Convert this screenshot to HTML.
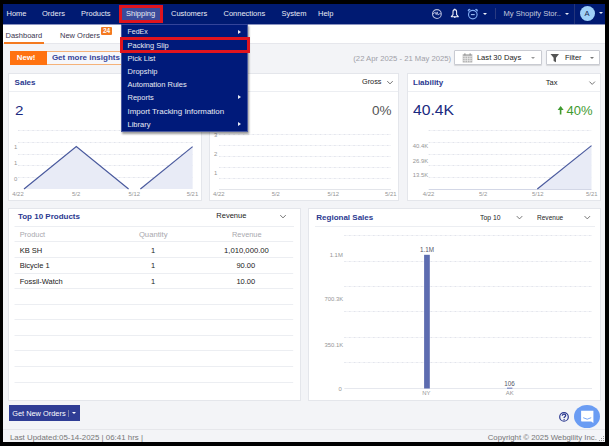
<!DOCTYPE html>
<html><head><meta charset="utf-8">
<style>
*{margin:0;padding:0;box-sizing:border-box}
html,body{width:609px;height:446px;overflow:hidden;background:#000}
body{position:relative;font-family:"Liberation Sans",sans-serif;font-size:7.5px;color:#333}
.a{position:absolute;white-space:nowrap;line-height:1}
#frame{position:absolute;left:3px;top:4px;width:602px;height:438px;background:#f3f4f7;overflow:hidden}
#nav{position:absolute;left:3px;top:4px;width:602px;height:20px;background:#001a72}
.nv{color:#e8ebf5;font-size:7.5px}
#tabs{position:absolute;left:3px;top:24px;width:602px;height:20px;background:#fff;border-bottom:1px solid #e6e7ec}
.card{position:absolute;background:#fff;border:1px solid #e4e6eb}
.ttl{color:#2b3990;font-weight:bold;font-size:8px}
.hl{position:absolute;height:1px;background:#eceef2}
.grid{position:absolute;height:0;border-top:1px dashed #e6e7eb}
.lbl{color:#8a8a8a;font-size:5px}
.menu{position:absolute;left:121px;top:24px;width:127px;height:107.5px;background:#001a7a;box-shadow:1px 1.5px 2px rgba(0,0,0,.4);border:1px solid #4a5aa0;border-top:1px solid #34449a}
.mi{color:#e8ebf5;font-size:7.5px}
.arr{position:absolute;width:0;height:0;border-top:2.5px solid transparent;border-bottom:2.5px solid transparent;border-left:3px solid #e8ebf5}
.row{position:absolute;height:1px;background:#eceef2}
.td{color:#222;font-size:7.5px}
</style></head><body>
<div id="frame"></div>
<!-- NAVBAR -->
<div id="nav"></div>
<div class="a nv" style="left:6.5px;top:10px">Home</div>
<div class="a nv" style="left:42px;top:10px">Orders</div>
<div class="a nv" style="left:81px;top:10px">Products</div>
<div class="a" style="left:119px;top:4.5px;width:44px;height:18.5px;background:#3b4b9a;border:3px solid #e0141e"></div>
<div class="a nv" style="left:126px;top:10px">Shipping</div>
<div class="a nv" style="left:171px;top:10px">Customers</div>
<div class="a nv" style="left:223.5px;top:10px">Connections</div>
<div class="a nv" style="left:281.5px;top:10px">System</div>
<div class="a nv" style="left:318px;top:10px">Help</div>

<!-- right nav icons -->
<svg class="a" style="left:430px;top:7px" width="14" height="14" viewBox="0 0 14 14">
<circle cx="6.9" cy="7" r="4.4" fill="none" stroke="#b4bbdc" stroke-width="1.05"/>
<path d="M2.8 7.2L5.2 5.2 6.2 7.6 7.2 4.9 8.1 8.1 9.3 6.8H11" fill="none" stroke="#b4bbdc" stroke-width="0.95" stroke-linejoin="round"/>
</svg>
<svg class="a" style="left:449px;top:7px" width="12" height="13" viewBox="0 0 12 13">
<path d="M5.8 2.6C4.5 2.6 4 3.6 4 4.8V7.7L2.3 9.7H9.3L7.6 7.7V4.8C7.6 3.6 7.1 2.6 5.8 2.6z" fill="none" stroke="#f0f2fa" stroke-width="1.05" stroke-linejoin="round"/>
<circle cx="5.8" cy="2.1" r=".6" fill="#f0f2fa"/><circle cx="5.8" cy="10.3" r=".8" fill="#f0f2fa"/>
</svg>
<svg class="a" style="left:466px;top:7px" width="14" height="14" viewBox="0 0 14 14">
<circle cx="6.8" cy="7.6" r="4.3" fill="none" stroke="#7fabf3" stroke-width="1.15"/>
<path d="M4.9 7.6h3.8" stroke="#9fc0f6" stroke-width="1.1"/>
<path d="M2.2 4.7L4.7 2.2A1.77 1.77 0 0 0 2.2 4.7z" fill="#7fabf3"/>
<path d="M11.4 4.7L8.9 2.2A1.77 1.77 0 0 1 11.4 4.7z" fill="#7fabf3"/>
</svg>
<div class="arr" style="left:483.2px;top:12.6px;border:none;border-left:2.1px solid transparent;border-right:2.1px solid transparent;border-top:2.6px solid #f0f2fa"></div>
<div class="a" style="left:495px;top:8px;width:1px;height:11px;background:#2a3a80"></div>
<div class="a" style="left:503.5px;top:10px;color:#c4c9de;font-size:7.6px">My Shopify Stor..</div>
<div class="arr" style="left:564.5px;top:12.5px;border:none;border-left:2px solid transparent;border-right:2px solid transparent;border-top:2.5px solid #e8ebf5"></div>
<div class="a" style="left:574px;top:4px;width:1px;height:20px;background:#23347a"></div>
<div class="a" style="left:579.5px;top:5.5px;width:15px;height:15px;border-radius:50%;background:#9fd0f8;color:#1a2850;font-size:7.6px;text-align:center;line-height:15px;transform:none">A</div>
<div class="arr" style="left:598.7px;top:12px;border:none;border-left:2px solid transparent;border-right:2px solid transparent;border-top:2.5px solid #e8ebf5"></div>

<!-- TABS -->
<div id="tabs"></div>
<div class="a" style="left:3px;top:24px;width:602px;height:1px;background:#8a93c0"></div>
<div class="a" style="left:5.5px;top:31.5px;color:#3a3550;font-size:7.5px">Dashboard</div>
<div class="a" style="left:4px;top:42px;width:40px;height:2px;background:#f47a20"></div>
<div class="a" style="left:60px;top:31.5px;color:#3a3550;font-size:7.5px">New Orders</div>
<div class="a" style="left:101px;top:27.3px;width:11px;height:7.3px;background:#f47a20;color:#fff;font-size:6.5px;font-weight:bold;text-align:center;line-height:7.5px;border-radius:1px">24</div>

<!-- insights row -->
<div class="a" style="left:10px;top:50.5px;width:37px;height:14.5px;background:#ff7210"></div>
<div class="a" style="left:16.8px;top:54.2px;color:#fff;font-weight:bold;font-size:7.8px">New!</div>
<div class="a" style="left:47px;top:50.5px;width:200px;height:14.5px;background:#f6f7fb;border:1px solid #f5b27a;border-left:none"></div>
<div class="a" style="left:51.9px;top:54.2px;color:#34449a;font-weight:bold;font-size:8px">Get more insights on your business</div>

<div class="a" style="left:353.3px;top:55px;color:#a0a0a8;font-size:7.7px">(22 Apr 2025 - 21 May 2025)</div>
<div class="a" style="left:454.4px;top:50px;width:87.7px;height:15px;background:#fff;border:1px solid #c9cbd2;border-radius:1px;box-shadow:0 1px 1px rgba(0,0,0,.12)"></div>
<svg class="a" style="left:462px;top:53px" width="11" height="10" viewBox="0 0 11 10">
<rect x="0.7" y="1.2" width="9.6" height="8.3" fill="#b4b4b4"/>
<g stroke="#f4f4f4" stroke-width="0.6"><path d="M0.7 3.4h9.6M0.7 5.4h9.6M0.7 7.4h9.6M3.1 3.4v6.1M5.5 3.4v6.1M7.9 3.4v6.1"/></g>
<g fill="#8a8a8a"><rect x="2.4" y="0.3" width="1" height="2"/><rect x="7.6" y="0.3" width="1" height="2"/></g>
</svg>
<div class="a" style="left:476.9px;top:53.7px;color:#222;font-size:7.6px">Last 30 Days</div>
<div class="arr" style="left:530.5px;top:56.5px;border:none;border-left:2.5px solid transparent;border-right:2.5px solid transparent;border-top:2.5px solid #999"></div>
<div class="a" style="left:546px;top:50px;width:53.5px;height:15px;background:#fff;border:1px solid #c9cbd2;border-radius:1px;box-shadow:0 1px 1px rgba(0,0,0,.12)"></div>
<svg class="a" style="left:550px;top:53px" width="10" height="10" viewBox="0 0 10 10"><path d="M0.5 1h8.5L6 4.8v4.4L3.6 8V4.8z" fill="#555"/></svg>
<div class="a" style="left:564.9px;top:53.7px;color:#222;font-size:7.5px">Filter</div>
<div class="arr" style="left:589.8px;top:56.5px;border:none;border-left:2px solid transparent;border-right:2px solid transparent;border-top:2.5px solid #777"></div>

<!-- TOP CARDS -->
<div class="card" style="left:7.5px;top:73px;width:194px;height:128px"></div>
<div class="hl" style="left:8.5px;top:91px;width:192px"></div>
<div class="a ttl" style="left:14.6px;top:78.7px">Sales</div>
<div class="a" style="left:15px;top:103.6px;color:#1a2a80;font-size:13.6px;transform:scaleX(1.12);transform-origin:0 0">2</div>

<div class="card" style="left:208.5px;top:73px;width:190px;height:128px"></div>
<div class="hl" style="left:209.5px;top:91px;width:188px"></div>
<div class="a" style="left:362px;top:78px;color:#222;font-size:7.3px">Gross</div>
<div class="a" style="left:372px;top:104px;color:#555;font-size:13.5px">0%</div>

<div class="card" style="left:406.5px;top:73px;width:194px;height:128px"></div>
<div class="hl" style="left:407.5px;top:91px;width:192px"></div>
<div class="a ttl" style="left:413px;top:79px">Liability</div>
<div class="a" style="left:545.8px;top:79px;color:#222;font-size:7.5px">Tax</div>
<div class="a" style="left:413px;top:104px;color:#1a2a80;font-size:13.8px;transform:scaleX(1.14);transform-origin:0 0">40.4K</div>
<svg class="a" style="left:557px;top:105px" width="8" height="10" viewBox="0 0 8 10"><path d="M3.6 2.5v7" stroke="#3f9a2f" stroke-width="1.6"/><path d="M0.6 5L3.6 0.9 6.6 5z" fill="#3f9a2f"/></svg><div class="a" style="left:566.5px;top:104px;color:#3f9a2f;font-size:13px">40%</div>

<!-- BOTTOM CARDS -->
<div class="card" style="left:7.5px;top:207.5px;width:293px;height:193px"></div>
<div class="a ttl" style="left:17.9px;top:212.8px">Top 10 Products</div>
<div class="a" style="left:216.3px;top:212px;color:#222;font-size:7.5px">Revenue</div>
<div class="hl" style="left:14.5px;top:226px;width:279px"></div>

<div class="card" style="left:307.5px;top:207.5px;width:293px;height:193px"></div>
<div class="a ttl" style="left:316.3px;top:213.6px">Regional Sales</div>
<div class="a" style="left:480.2px;top:213.5px;color:#222;font-size:7.2px;transform:scaleX(0.95);transform-origin:0 0">Top 10</div>
<div class="a" style="left:536.6px;top:213.5px;color:#222;font-size:7.4px;transform:scaleX(0.885);transform-origin:0 0">Revenue</div>
<div class="hl" style="left:314.5px;top:226px;width:280px"></div>

<!-- button + footer -->
<div class="a" style="left:8.7px;top:405px;width:71.4px;height:16px;background:#2f3d95"></div>
<div class="a" style="left:12.2px;top:409.5px;color:#fff;font-size:7.4px">Get New Orders</div>
<div class="a" style="left:67.5px;top:410px;width:1px;height:7px;background:#7a80a8"></div>
<div class="arr" style="left:72.2px;top:412.3px;border:none;border-left:2px solid transparent;border-right:2px solid transparent;border-top:2.6px solid #fff"></div>
<div class="a" style="left:3px;top:429px;width:602px;height:1px;background:#e6e7eb"></div><svg class="a" style="left:598px;top:435px" width="7" height="7" viewBox="0 0 7 7"><g fill="#9a9a9a"><rect x="5" y="1" width="1" height="1"/><rect x="3" y="3" width="1" height="1"/><rect x="5" y="3" width="1" height="1"/><rect x="1" y="5" width="1" height="1"/><rect x="3" y="5" width="1" height="1"/><rect x="5" y="5" width="1" height="1"/></g></svg>
<div class="a" style="left:9.9px;top:433.5px;color:#777;font-size:7.9px">Last Updated:05-14-2025 | 06:41 hrs |</div>
<div class="a" style="left:487.7px;top:433.5px;color:#777;font-size:7.8px">Copyright © 2025 Webgility Inc.</div>

<svg class="a" style="left:0;top:0" width="609" height="446" viewBox="0 0 609 446" font-family="Liberation Sans, sans-serif"><line x1="18" y1="130.5" x2="193" y2="130.5" stroke="#f3f4f7" stroke-width="1"/><line x1="18" y1="130.5" x2="193" y2="130.5" stroke="#e2e4ec" stroke-width="1" stroke-dasharray="1.4 3.4"/><line x1="18" y1="142.5" x2="193" y2="142.5" stroke="#f3f4f7" stroke-width="1"/><line x1="18" y1="142.5" x2="193" y2="142.5" stroke="#e2e4ec" stroke-width="1" stroke-dasharray="1.4 3.4"/><line x1="18" y1="154.5" x2="193" y2="154.5" stroke="#f3f4f7" stroke-width="1"/><line x1="18" y1="154.5" x2="193" y2="154.5" stroke="#e2e4ec" stroke-width="1" stroke-dasharray="1.4 3.4"/><line x1="18" y1="165.5" x2="193" y2="165.5" stroke="#f3f4f7" stroke-width="1"/><line x1="18" y1="165.5" x2="193" y2="165.5" stroke="#e2e4ec" stroke-width="1" stroke-dasharray="1.4 3.4"/><line x1="18" y1="177.5" x2="193" y2="177.5" stroke="#f3f4f7" stroke-width="1"/><line x1="18" y1="177.5" x2="193" y2="177.5" stroke="#e2e4ec" stroke-width="1" stroke-dasharray="1.4 3.4"/><polygon points="24,189 76.3,146.6 128.6,189" fill="#e8ebf6"/><polygon points="140.4,189 192.6,146.6 192.6,189" fill="#e8ebf6"/><polyline points="24,189 76.3,146.6 128.6,189" fill="none" stroke="#4a5a9e" stroke-width="1.2"/><polyline points="140.4,189 192.6,146.6" fill="none" stroke="#4a5a9e" stroke-width="1.2"/><text x="14" y="149" font-size="5.9" fill="#959595" text-anchor="start">1</text><text x="14" y="164.8" font-size="5.9" fill="#959595" text-anchor="start">1</text><text x="14" y="180.9" font-size="5.9" fill="#959595" text-anchor="start">0</text><text x="12.2" y="195.6" font-size="5.9" fill="#959595" text-anchor="start">4/22</text><text x="72" y="195.6" font-size="5.9" fill="#959595" text-anchor="start">5/2</text><text x="128.6" y="195.6" font-size="5.9" fill="#959595" text-anchor="start">5/12</text><text x="186.7" y="195.6" font-size="5.9" fill="#959595" text-anchor="start">5/21</text><line x1="219" y1="134.5" x2="391" y2="134.5" stroke="#f3f4f7" stroke-width="1"/><line x1="219" y1="134.5" x2="391" y2="134.5" stroke="#e2e4ec" stroke-width="1" stroke-dasharray="1.4 3.4"/><line x1="219" y1="145.5" x2="391" y2="145.5" stroke="#f3f4f7" stroke-width="1"/><line x1="219" y1="145.5" x2="391" y2="145.5" stroke="#e2e4ec" stroke-width="1" stroke-dasharray="1.4 3.4"/><line x1="219" y1="156.5" x2="391" y2="156.5" stroke="#f3f4f7" stroke-width="1"/><line x1="219" y1="156.5" x2="391" y2="156.5" stroke="#e2e4ec" stroke-width="1" stroke-dasharray="1.4 3.4"/><line x1="219" y1="167.5" x2="391" y2="167.5" stroke="#f3f4f7" stroke-width="1"/><line x1="219" y1="167.5" x2="391" y2="167.5" stroke="#e2e4ec" stroke-width="1" stroke-dasharray="1.4 3.4"/><line x1="219" y1="178.5" x2="391" y2="178.5" stroke="#f3f4f7" stroke-width="1"/><line x1="219" y1="178.5" x2="391" y2="178.5" stroke="#e2e4ec" stroke-width="1" stroke-dasharray="1.4 3.4"/><line x1="219" y1="189.5" x2="391" y2="189.5" stroke="#e3e5ea" stroke-width="1"/><text x="214" y="136.7" font-size="5.9" fill="#959595" text-anchor="start">3</text><text x="214" y="155.6" font-size="5.9" fill="#959595" text-anchor="start">2</text><text x="214" y="174.9" font-size="5.9" fill="#959595" text-anchor="start">1</text><text x="213" y="195.9" font-size="5.9" fill="#959595" text-anchor="start">4/22</text><text x="271.7" y="195.9" font-size="5.9" fill="#959595" text-anchor="start">5/2</text><text x="327.6" y="195.9" font-size="5.9" fill="#959595" text-anchor="start">5/12</text><text x="385" y="195.9" font-size="5.9" fill="#959595" text-anchor="start">5/21</text><line x1="428.7" y1="130.5" x2="591.5" y2="130.5" stroke="#f3f4f7" stroke-width="1"/><line x1="428.7" y1="130.5" x2="591.5" y2="130.5" stroke="#e2e4ec" stroke-width="1" stroke-dasharray="1.4 3.4"/><line x1="428.7" y1="142.5" x2="591.5" y2="142.5" stroke="#f3f4f7" stroke-width="1"/><line x1="428.7" y1="142.5" x2="591.5" y2="142.5" stroke="#e2e4ec" stroke-width="1" stroke-dasharray="1.4 3.4"/><line x1="428.7" y1="154.5" x2="591.5" y2="154.5" stroke="#f3f4f7" stroke-width="1"/><line x1="428.7" y1="154.5" x2="591.5" y2="154.5" stroke="#e2e4ec" stroke-width="1" stroke-dasharray="1.4 3.4"/><line x1="428.7" y1="165.5" x2="591.5" y2="165.5" stroke="#f3f4f7" stroke-width="1"/><line x1="428.7" y1="165.5" x2="591.5" y2="165.5" stroke="#e2e4ec" stroke-width="1" stroke-dasharray="1.4 3.4"/><line x1="428.7" y1="177.5" x2="591.5" y2="177.5" stroke="#f3f4f7" stroke-width="1"/><line x1="428.7" y1="177.5" x2="591.5" y2="177.5" stroke="#e2e4ec" stroke-width="1" stroke-dasharray="1.4 3.4"/><line x1="428.7" y1="189.5" x2="591.5" y2="189.5" stroke="#d3d7e6" stroke-width="1"/><polygon points="537.3,189 591.5,145.6 591.5,189" fill="#e8ebf6"/><polyline points="537.3,189 591.5,145.6" fill="none" stroke="#4a5a9e" stroke-width="1.2"/><text x="412.7" y="148.3" font-size="5.9" fill="#959595" text-anchor="start">40.4K</text><text x="412.7" y="162.8" font-size="5.9" fill="#959595" text-anchor="start">26.9K</text><text x="412.7" y="177" font-size="5.9" fill="#959595" text-anchor="start">13.5K</text><text x="422.8" y="195.6" font-size="5.9" fill="#959595" text-anchor="start">4/22</text><text x="479" y="195.6" font-size="5.9" fill="#959595" text-anchor="start">5/2</text><text x="532" y="195.6" font-size="5.9" fill="#959595" text-anchor="start">5/12</text><text x="586" y="195.6" font-size="5.9" fill="#959595" text-anchor="start">5/21</text><line x1="344.3" y1="235.5" x2="592" y2="235.5" stroke="#f3f4f7" stroke-width="1"/><line x1="344.3" y1="235.5" x2="592" y2="235.5" stroke="#e2e4ec" stroke-width="1" stroke-dasharray="1.4 3.4"/><line x1="344.3" y1="261.5" x2="592" y2="261.5" stroke="#f3f4f7" stroke-width="1"/><line x1="344.3" y1="261.5" x2="592" y2="261.5" stroke="#e2e4ec" stroke-width="1" stroke-dasharray="1.4 3.4"/><line x1="344.3" y1="286.5" x2="592" y2="286.5" stroke="#f3f4f7" stroke-width="1"/><line x1="344.3" y1="286.5" x2="592" y2="286.5" stroke="#e2e4ec" stroke-width="1" stroke-dasharray="1.4 3.4"/><line x1="344.3" y1="311.5" x2="592" y2="311.5" stroke="#f3f4f7" stroke-width="1"/><line x1="344.3" y1="311.5" x2="592" y2="311.5" stroke="#e2e4ec" stroke-width="1" stroke-dasharray="1.4 3.4"/><line x1="344.3" y1="337.5" x2="592" y2="337.5" stroke="#f3f4f7" stroke-width="1"/><line x1="344.3" y1="337.5" x2="592" y2="337.5" stroke="#e2e4ec" stroke-width="1" stroke-dasharray="1.4 3.4"/><line x1="344.3" y1="362.5" x2="592" y2="362.5" stroke="#f3f4f7" stroke-width="1"/><line x1="344.3" y1="362.5" x2="592" y2="362.5" stroke="#e2e4ec" stroke-width="1" stroke-dasharray="1.4 3.4"/><line x1="344.3" y1="388.5" x2="592" y2="388.5" stroke="#e6e8ee" stroke-width="1"/><rect x="424.1" y="254.8" width="5.7" height="133.7" fill="#5d6cb0"/><rect x="507" y="387.6" width="5.4" height="1.2" fill="#7d89c4"/><text x="342.8" y="257.2" font-size="5.9" fill="#959595" text-anchor="end">1.1M</text><text x="343.2" y="301.1" font-size="5.9" fill="#959595" text-anchor="end">700.3K</text><text x="343.2" y="346.5" font-size="5.9" fill="#959595" text-anchor="end">350.1K</text><text x="341.8" y="390.5" font-size="5.9" fill="#959595" text-anchor="end">0</text><text x="427" y="252.3" font-size="6.3" fill="#556" text-anchor="middle">1.1M</text><text x="509.6" y="385.9" font-size="6.3" fill="#556" text-anchor="middle">106</text><text x="426.4" y="395" font-size="5.9" fill="#959595" text-anchor="middle">NY</text><text x="509.8" y="395" font-size="5.9" fill="#959595" text-anchor="middle">AK</text><polyline points="387.25,81.1 390,83.9 392.75,81.1" fill="none" stroke="#666" stroke-width="0.9"/><polyline points="589.45,81.6 592.2,84.4 594.95,81.6" fill="none" stroke="#666" stroke-width="0.9"/><polyline points="280.25,215.1 283,217.9 285.75,215.1" fill="none" stroke="#666" stroke-width="0.9"/><polyline points="516.75,216.1 519.5,218.9 522.25,216.1" fill="none" stroke="#666" stroke-width="0.9"/><polyline points="584.55,216.1 587.3,218.9 590.05,216.1" fill="none" stroke="#666" stroke-width="0.9"/><line x1="14.5" y1="226.5" x2="293.2" y2="226.5" stroke="#eceef2"/><line x1="14.5" y1="241.5" x2="293.2" y2="241.5" stroke="#eceef2"/><line x1="14.5" y1="257.5" x2="293.2" y2="257.5" stroke="#eceef2"/><line x1="14.5" y1="273.5" x2="293.2" y2="273.5" stroke="#eceef2"/><line x1="14.5" y1="288.5" x2="293.2" y2="288.5" stroke="#eceef2"/><line x1="14.5" y1="304.5" x2="293.2" y2="304.5" stroke="#eceef2"/><line x1="14.5" y1="319.5" x2="293.2" y2="319.5" stroke="#eceef2"/><line x1="14.5" y1="335.5" x2="293.2" y2="335.5" stroke="#eceef2"/><line x1="14.5" y1="350.5" x2="293.2" y2="350.5" stroke="#eceef2"/><line x1="14.5" y1="366.5" x2="293.2" y2="366.5" stroke="#eceef2"/><line x1="14.5" y1="382.5" x2="293.2" y2="382.5" stroke="#eceef2"/></svg>
<!-- TABLE -->
<div class="a" style="left:19.7px;top:231px;color:#a8a8ae;font-size:7.4px">Product</div>
<div class="a" style="left:138.9px;top:231px;color:#a8a8ae;font-size:7.7px">Quantity</div>
<div class="a" style="left:232px;top:231px;color:#a8a8ae;font-size:7.4px">Revenue</div>
<div class="a td" style="left:19.7px;top:246.5px">KB SH</div>
<div class="a td" style="left:151px;top:246.5px">1</div>
<div class="a td" style="left:224px;top:246.5px;font-size:7.7px">1,010,000.00</div>
<div class="a td" style="left:19.7px;top:262.3px">Bicycle 1</div>
<div class="a td" style="left:151px;top:262.3px">1</div>
<div class="a td" style="left:236.4px;top:262.3px">90.00</div>
<div class="a td" style="left:19.7px;top:278px">Fossil-Watch</div>
<div class="a td" style="left:151px;top:278px">1</div>
<div class="a td" style="left:236.4px;top:278px">10.00</div>
<!-- help + chat -->
<svg class="a" style="left:558px;top:411px" width="12" height="12" viewBox="0 0 12 12">
<circle cx="6" cy="5.9" r="4.3" fill="none" stroke="#2b3990" stroke-width="1.2"/>
<path d="M4.3 4.8c0-1 .7-1.6 1.7-1.6s1.7.6 1.7 1.4c0 1.1-1.6 1.1-1.6 2.3" fill="none" stroke="#2b3990" stroke-width="1.3"/>
<circle cx="6.1" cy="8.4" r=".65" fill="#2b3990"/>
</svg>
<div class="a" style="left:574.3px;top:405.3px;width:25.8px;height:23px;border-radius:50%;background:#6a9cf3"></div>
<svg class="a" style="left:580px;top:410px" width="14" height="14" viewBox="0 0 14 14">
<path d="M1.1 0.7h12.3v12.3l-2.2-1.5H1.8a.7.7 0 0 1-.7-.7z" fill="#fff"/>
<path d="M3.2 7.7Q7.2 10.7 11.2 7.7" fill="none" stroke="#6a9cf3" stroke-width=".9"/>
</svg>

<!-- MENU -->
<div class="menu"></div>
<div class="a mi" style="left:127.5px;top:28px;font-size:7px">FedEx</div>
<div class="arr" style="left:237.5px;top:30px"></div>
<div class="a" style="left:119.5px;top:37px;width:130px;height:16px;border:3px solid #e0141e"></div>
<div class="a mi" style="left:127.5px;top:41.5px">Packing Slip</div>
<div class="a mi" style="left:127.5px;top:54.5px">Pick List</div>
<div class="a mi" style="left:127.5px;top:67.5px">Dropship</div>
<div class="a mi" style="left:127.5px;top:81px">Automation Rules</div>
<div class="arr" style="left:237.5px;top:95px"></div>
<div class="a mi" style="left:127.5px;top:94px">Reports</div>
<div class="a mi" style="left:127.5px;top:107.5px;font-size:7.95px">Import Tracking Information</div>
<div class="a mi" style="left:127.5px;top:120.5px">Library</div>
<div class="arr" style="left:237.5px;top:121.5px"></div>
</body></html>
